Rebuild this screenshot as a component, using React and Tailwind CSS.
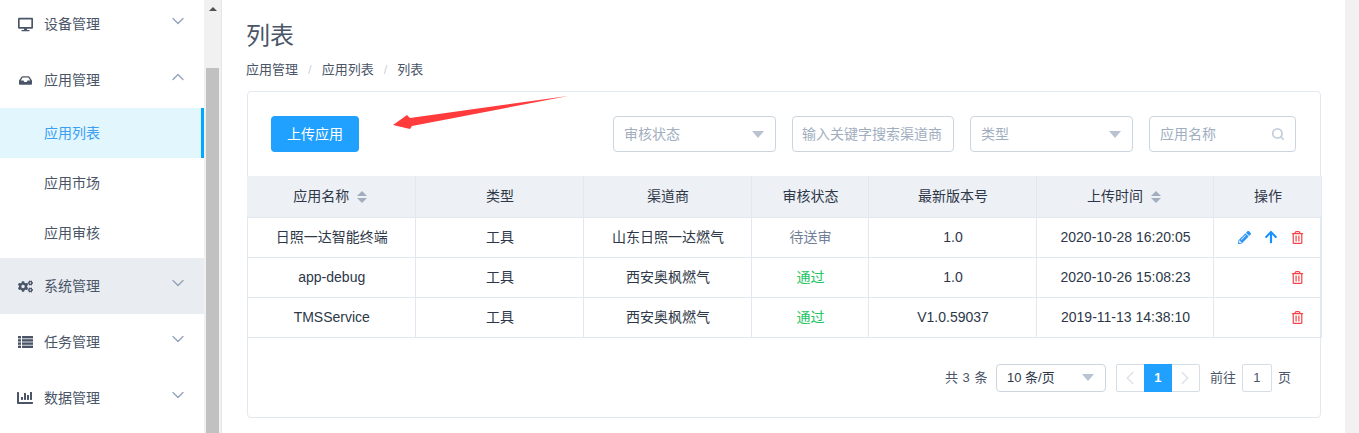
import React from 'react';
import { FaDesktop, FaInbox, FaCogs, FaChartBar, FaPencilAlt, FaArrowUp, FaRegTrashAlt } from 'react-icons/fa';
import { ChevronDown, ChevronUp, ChevronLeft, ChevronRight, Search } from 'lucide-react';

const font = { fontFamily: '"Liberation Sans", "Noto Sans CJK SC", sans-serif' };

const rows = [
  { name: '日照一达智能终端', type: '工具', channel: '山东日照一达燃气', status: '待送审', statusClass: 'text-[#718096]', version: '1.0', time: '2020-10-28 16:20:05', full: true },
  { name: 'app-debug', type: '工具', channel: '西安奥枫燃气', status: '通过', statusClass: 'text-[#22c55e]', version: '1.0', time: '2020-10-26 15:08:23' },
  { name: 'TMSService', type: '工具', channel: '西安奥枫燃气', status: '通过', statusClass: 'text-[#22c55e]', version: 'V1.0.59037', time: '2019-11-13 14:38:10' },
];

function ListIcon() {
  return (
    <svg width="15" height="12" viewBox="0 0 15 12" fill="currentColor">
      <rect x="0" y="0" width="3" height="2.4" />
      <rect x="4" y="0" width="11" height="2.4" />
      <rect x="0" y="3.2" width="3" height="2.4" />
      <rect x="4" y="3.2" width="11" height="2.4" />
      <rect x="0" y="6.4" width="3" height="2.4" />
      <rect x="4" y="6.4" width="11" height="2.4" />
      <rect x="0" y="9.6" width="3" height="2.4" />
      <rect x="4" y="9.6" width="11" height="2.4" />
    </svg>
  );
}

function MenuGroup({ icon, label, open, active }) {
  const Chevron = open ? ChevronUp : ChevronDown;
  return (
    <div className={`h-[56px] flex items-center pl-[17px] pr-[15px] text-[14px] text-[#4a5568] ${active ? 'bg-[#e9ecf1]' : ''}`}>
      <span className="w-[16px] flex justify-center text-[#4a5568]">{icon}</span>
      <span className="ml-[11px] flex-1">{label}</span>
      <Chevron size={20} strokeWidth={1.6} className="text-[#94a3b8] -mt-[6px] mr-[1px]" />
    </div>
  );
}

function SubItem({ label, active }) {
  return (
    <div className={`h-[50px] flex items-center pl-[44px] text-[14px] ${active ? 'bg-[#e2f6fe] text-[#3b9ff3] border-r-[3px] border-[#00a8ff]' : 'text-[#4a5568]'}`}>
      {label}
    </div>
  );
}

function SortCaret() {
  return (
    <span className="inline-flex flex-col gap-[2px] ml-[8px] mr-[3px] align-middle">
      <span className="w-0 h-0 border-x-[5px] border-x-transparent border-b-[5px] border-b-[#a0aec0]" />
      <span className="w-0 h-0 border-x-[5px] border-x-transparent border-t-[5px] border-t-[#a0aec0]" />
    </span>
  );
}

function SelectBox({ label, width, color = 'text-[#a0aec0]', height = 'h-[36px]', textSize = 'text-[14px]' }) {
  return (
    <div className={`${width} ${height} border border-[#cbd5e0] rounded-[4px] flex items-center justify-between pl-[10px] pr-[11px] ${textSize} ${color}`}>
      <span>{label}</span>
      <span className="w-0 h-0 border-x-[6px] border-x-transparent border-t-[7px] border-t-[#b8c2d0]" />
    </div>
  );
}

export default function App() {
  return (
    <div className="h-[433px] w-[1359px] overflow-hidden flex bg-white relative" style={font}>
      {/* sidebar */}
      <aside className="w-[204px] shrink-0 -mt-[4px]">
        <MenuGroup icon={<FaDesktop size={15} />} label="设备管理" />
        <MenuGroup icon={<FaInbox size={13} />} label="应用管理" open />
        <SubItem label="应用列表" active />
        <SubItem label="应用市场" />
        <SubItem label="应用审核" />
        <MenuGroup icon={<FaCogs size={15} />} label="系统管理" active />
        <MenuGroup icon={<ListIcon />} label="任务管理" />
        <MenuGroup icon={<FaChartBar size={16} />} label="数据管理" />
      </aside>

      {/* sidebar scrollbar */}
      <div className="w-[18px] shrink-0 bg-[#f1f1f1] border-r border-[#e6e6e6] flex flex-col items-center">
        <span className="mt-[7px] w-0 h-0 border-x-[4px] border-x-transparent border-b-[4px] border-b-[#505050]" />
        <div className="mt-[57px] w-[13px] flex-1 bg-[#c1c1c1]" />
      </div>

      {/* main */}
      <main className="flex-1 min-w-0 pl-[25px] pr-[24px] text-[#2d3748]">
        <h1 className="-ml-px mt-[20px] text-[24px] leading-[32px] text-[#4a5568]">列表</h1>
        <div className="-ml-px mt-[7px] flex items-center text-[13px] leading-[22px] text-[#4a5568]">
          <span>应用管理</span>
          <span className="mx-[10px] text-[#cbd5e0]">/</span>
          <span>应用列表</span>
          <span className="mx-[10px] text-[#cbd5e0]">/</span>
          <span>列表</span>
        </div>

        <section className="mt-[10px] h-[327px] border border-[#e2e8f0] rounded-[4px]">
          <div className="h-[84px] flex items-start pt-[24px] pl-[23px] pr-[24px]">
            <button className="w-[88px] h-[36px] rounded-[4px] bg-[#20a0ff] text-white text-[14px]">上传应用</button>
            <div className="ml-auto flex gap-[16px]">
              <SelectBox label="审核状态" width="w-[163px]" />
              <div className="w-[162px] h-[36px] border border-[#cbd5e0] rounded-[4px] flex items-center pl-[9px] text-[14px] text-[#a0aec0] whitespace-nowrap overflow-hidden">输入关键字搜索渠道商</div>
              <SelectBox label="类型" width="w-[163px]" />
              <div className="w-[147px] h-[36px] border border-[#cbd5e0] rounded-[4px] flex items-center justify-between pl-[10px] pr-[10px] text-[14px] text-[#a0aec0]">
                <span>应用名称</span>
                <Search size={14} strokeWidth={3} className="text-[#c5cfdc]" />
              </div>
            </div>
          </div>

          <table className="-ml-px w-[1074px] table-fixed border-collapse text-[14px] text-center [&_td]:pl-[2px] [&_th]:pl-[2px]">
            <colgroup>
              <col className="w-[168px]" />
              <col className="w-[168px]" />
              <col className="w-[168px]" />
              <col className="w-[117px]" />
              <col className="w-[168px]" />
              <col className="w-[177px]" />
              <col className="w-[108px]" />
            </colgroup>
            <thead>
              <tr className="h-[41px] bg-[#edf0f5]">
                <th className="font-normal border-r border-b border-[#e2e8f0]">应用名称<SortCaret /></th>
                <th className="font-normal border-r border-b border-[#e2e8f0]">类型</th>
                <th className="font-normal border-r border-b border-[#e2e8f0]">渠道商</th>
                <th className="font-normal border-r border-b border-[#e2e8f0]">审核状态</th>
                <th className="font-normal border-r border-b border-[#e2e8f0]">最新版本号</th>
                <th className="font-normal border-r border-b border-[#e2e8f0]">上传时间<SortCaret /></th>
                <th className="font-normal border-r border-b border-[#e2e8f0]">操作</th>
              </tr>
            </thead>
            <tbody>
              {rows.map(row => (
                <tr key={row.name} className="h-[40px]">
                  <td className="border-r border-b border-[#e2e8f0]">{row.name}</td>
                  <td className="border-r border-b border-[#e2e8f0]">{row.type}</td>
                  <td className="border-r border-b border-[#e2e8f0]">{row.channel}</td>
                  <td className={`border-r border-b border-[#e2e8f0] ${row.statusClass}`}>{row.status}</td>
                  <td className="border-r border-b border-[#e2e8f0]">{row.version}</td>
                  <td className="border-r border-b border-[#e2e8f0]">{row.time}</td>
                  <td className="border-r border-b border-[#e2e8f0]">
                    <div className="flex items-center justify-end gap-[13px] pr-[17px]">
                      {row.full && <FaPencilAlt size={13} className="text-[#2f95f5]" />}
                      {row.full && <FaArrowUp size={14} className="text-[#1890ff]" />}
                      <FaRegTrashAlt size={13} className="text-[#f5454a]" />
                    </div>
                  </td>
                </tr>
              ))}
            </tbody>
          </table>

          <div className="mt-[26px] flex items-center justify-end pr-[29px] text-[13px] text-[#4a5568]">
            <span className="tracking-[0.5px]">共 3 条</span>
            <div className="ml-[8px]">
              <SelectBox label="10 条/页" width="w-[110px]" height="h-[28px]" color="text-[#2d3748]" textSize="text-[13px]" />
            </div>
            <div className="ml-[10px] h-[28px] flex border border-[#d5dde7] rounded-[2px]">
              <span className="w-[27px] flex items-center justify-center text-[#dfe3e8]"><ChevronLeft size={22} strokeWidth={1.8} /></span>
              <span className="w-[28px] -my-px flex items-center justify-center bg-[#20a0ff] text-white font-bold text-[13px]">1</span>
              <span className="w-[27px] flex items-center justify-center text-[#dfe3e8]"><ChevronRight size={22} strokeWidth={1.8} /></span>
            </div>
            <span className="ml-[10px]">前往</span>
            <span className="ml-[6px] w-[30px] h-[28px] border border-[#d5dde7] rounded-[2px] flex items-center justify-center">1</span>
            <span className="ml-[6px]">页</span>
          </div>
        </section>
      </main>

      {/* page scrollbar */}
      <div className="w-[14px] shrink-0 bg-[#f1f1f1]" />

      {/* red annotation arrow */}
      <svg className="absolute left-0 top-0 pointer-events-none" width="1359" height="433">
        <polygon points="393,125 407,115 410,118 568,96 412,126 410,129" fill="#ff3b3b" />
      </svg>
    </div>
  );
}
